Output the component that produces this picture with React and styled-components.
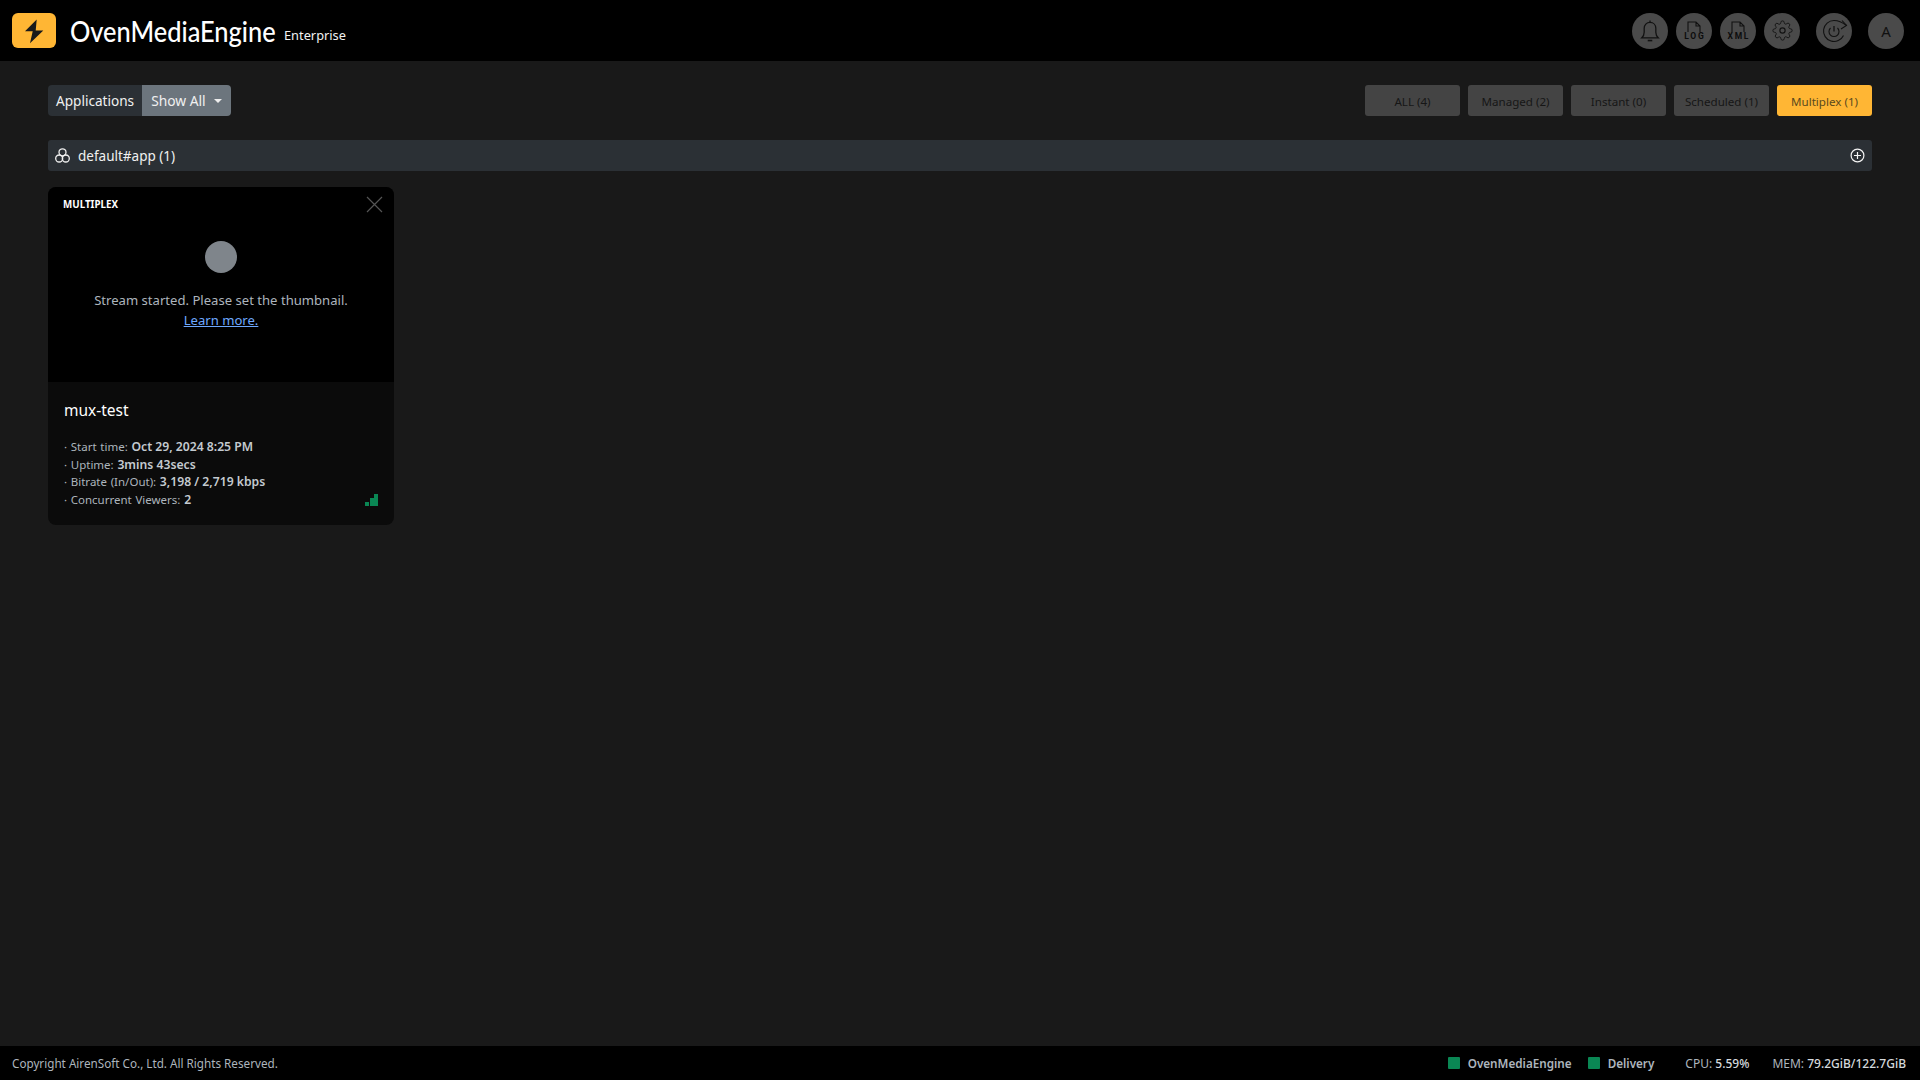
import React from 'react'
import styled, { createGlobalStyle } from 'styled-components'

const filters = [
  { label: 'ALL (4)' },
  { label: 'Managed (2)' },
  { label: 'Instant (0)' },
  { label: 'Scheduled (1)' },
  { label: 'Multiplex (1)', active: true },
]

function Bolt() {
  return (
    <svg width="22" height="26" viewBox="0 0 22 26">
      <path d="M13.700 1.500 2 13.200h7.700L7 25.200l13.300-12.700h-7.600z" fill="#1a1a1a" />
    </svg>
  )
}

function BellIcon() {
  return (
    <svg width="20" height="24" viewBox="0 0 22 26" fill="none" stroke="#111" strokeWidth="1.400">
      <path d="M2 20.500h18c-1.800-1.600-2.600-3-2.600-6V10c0-3.600-2.600-6.400-6.400-6.400S4.600 6.400 4.600 10v4.500c0 3-.8 4.400-2.600 6z" />
      <path d="M11 1.500v2" />
      <path d="M8.500 23.500h5" strokeWidth="1.800" />
    </svg>
  )
}

function FileIcon({ label }) {
  return (
    <FileWrap>
      <svg width="16" height="11" viewBox="0 0 16 11" fill="none" stroke="#111" strokeWidth="1.100">
        <path d="M2 11V1h8l4 4v6M10 1v4h4" />
      </svg>
      <FileLabel>{label}</FileLabel>
    </FileWrap>
  )
}

function GearIcon() {
  return (
    <svg width="21" height="21" viewBox="0 0 24 24" fill="none" stroke="#111" strokeWidth="1">
      <path d="M19.400 15a1.650 1.650 0 0 0 .33 1.820l.06.06a2 2 0 1 1-2.830 2.830l-.06-.06a1.650 1.650 0 0 0-2.820 1.170V21a2 2 0 1 1-4 0v-.09A1.650 1.650 0 0 0 7.260 19.740l-.06.06a2 2 0 1 1-2.830-2.830l.06-.06a1.650 1.650 0 0 0-1.170-2.820H3a2 2 0 1 1 0-4h.09A1.650 1.650 0 0 0 4.260 7.260l-.06-.06a2 2 0 1 1 2.830-2.830l.06.06a1.650 1.650 0 0 0 1.820.33H9a1.650 1.650 0 0 0 1-1.510V3a2 2 0 1 1 4 0v.09a1.650 1.650 0 0 0 2.820 1.170l.06-.06a2 2 0 1 1 2.830 2.830l-.06.06a1.650 1.650 0 0 0-.33 1.820V9a1.650 1.650 0 0 0 1.510 1H21a2 2 0 1 1 0 4h-.09a1.650 1.650 0 0 0-1.510 1z" />
      <circle cx="12" cy="12" r="3" strokeWidth="1.300" />
    </svg>
  )
}

function RestartIcon() {
  return (
    <svg width="30" height="28" viewBox="0 0 30 28" fill="none" stroke="#111" strokeWidth="1.100">
      <path d="M24.500 18.500A10.500 10.500 0 1 1 15 3.500c4 0 8 1.500 12.500 5" />
      <path d="M23 3.500l4.500 5-5.500 3.500" />
      <path d="M11.500 11a5 5 0 1 0 7 0" />
      <path d="M15 9v5.500" strokeWidth="1.300" />
    </svg>
  )
}

function ClusterIcon() {
  return (
    <svg width="15" height="15" viewBox="0 0 15 15" fill="none" stroke="#f0f0f0" strokeWidth="1.300">
      <circle cx="7.500" cy="4.300" r="3.500" />
      <circle cx="4.200" cy="10.500" r="3.500" />
      <circle cx="10.800" cy="10.500" r="3.500" />
    </svg>
  )
}

function PlusCircle() {
  return (
    <svg width="15" height="15" viewBox="0 0 15 15" fill="none" stroke="#f4f4f4">
      <circle cx="7.500" cy="7.500" r="6.400" strokeWidth="1.200" />
      <path d="M7.500 4v7M4 7.500h7" strokeWidth="1.200" />
    </svg>
  )
}

function CloseIcon() {
  return (
    <svg width="17" height="17" viewBox="0 0 17 17" stroke="#555" strokeWidth="1.200">
      <path d="M1 1l15 15M16 1 1 16" />
    </svg>
  )
}

function SignalIcon() {
  return (
    <SignalBars>
      <Bar $h={4} />
      <Bar $h={8} />
      <Bar $h={12} />
    </SignalBars>
  )
}

export default function App() {
  return (
    <Page>
      <GlobalStyle />
      <Header>
        <Brand>
          <LogoBox>
            <Bolt />
          </LogoBox>
          <LogoText>OvenMediaEngine</LogoText>
          <Edition>Enterprise</Edition>
        </Brand>
        <HeaderActions>
          <RoundButton><BellIcon /></RoundButton>
          <RoundButton><FileIcon label="LOG" /></RoundButton>
          <RoundButton><FileIcon label="XML" /></RoundButton>
          <RoundButton><GearIcon /></RoundButton>
          <RoundButton $gap={16}><RestartIcon /></RoundButton>
          <RoundButton $gap={16}><Avatar>A</Avatar></RoundButton>
        </HeaderActions>
      </Header>

      <Main>
        <Toolbar>
          <SelectGroup>
            <SelectLabel>Applications</SelectLabel>
            <SelectButton>Show All<Caret /></SelectButton>
          </SelectGroup>
          <Filters>
            {filters.map(f => (
              <FilterButton key={f.label} $active={f.active}>{f.label}</FilterButton>
            ))}
          </Filters>
        </Toolbar>

        <GroupBar>
          <GroupTitle>
            <ClusterIcon />
            default#app (1)
          </GroupTitle>
          <PlusCircle />
        </GroupBar>

        <Card>
          <Thumb>
            <TypeTag>MULTIPLEX</TypeTag>
            <CloseSlot><CloseIcon /></CloseSlot>
            <Dot />
            <ThumbText>Stream started. Please set the thumbnail.</ThumbText>
            <LearnMore href="#">Learn more.</LearnMore>
          </Thumb>
          <CardBody>
            <StreamName>mux-test</StreamName>
            <Stat>· Start time: <b>Oct 29, 2024 8:25 PM</b></Stat>
            <Stat>· Uptime: <b>3mins 43secs</b></Stat>
            <Stat>· Bitrate (In/Out): <b>3,198 / 2,719 kbps</b></Stat>
            <Stat>· Concurrent Viewers: <b>2</b></Stat>
            <SignalSlot><SignalIcon /></SignalSlot>
          </CardBody>
        </Card>
      </Main>

      <Footer>
        <Copyright>Copyright AirenSoft Co., Ltd. All Rights Reserved.</Copyright>
        <Status>
          <StatusItem><Square />OvenMediaEngine</StatusItem>
          <StatusItem><Square />Delivery</StatusItem>
          <Metric $gap={15}>CPU: <b>5.59%</b></Metric>
          <Metric $gap={23}>MEM: <b>79.2GiB/122.7GiB</b></Metric>
        </Status>
      </Footer>
    </Page>
  )
}

const GlobalStyle = createGlobalStyle`
  html, body {
    margin: 0;
    padding: 0;
    background: #191919;
  }
  * {
    box-sizing: border-box;
  }
`

const Page = styled.div`
  width: 1920px;
  height: 1080px;
  display: flex;
  flex-direction: column;
  background: #191919;
  color: #dee2e6;
  font-family: 'Noto Sans', 'Open Sans', sans-serif;
  overflow: hidden;
`

const Header = styled.header`
  height: 61px;
  background: #000;
  display: flex;
  align-items: center;
  justify-content: space-between;
  padding: 0 16px 0 12px;
`

const Brand = styled.div`
  display: flex;
  align-items: center;
`

const LogoBox = styled.div`
  width: 44px;
  height: 35px;
  background: #ffb634;
  border-radius: 6px;
  display: flex;
  align-items: center;
  justify-content: center;
`

const LogoText = styled.span`
  display: inline-block;
  margin: 0 -29px 0 14px;
  font-family: Lato, 'Noto Sans', sans-serif;
  font-size: 29px;
  font-weight: 500;
  line-height: 1;
  color: #fff;
  transform: scaleX(0.875);
  transform-origin: left center;
`

const Edition = styled.span`
  margin: 9px 0 0 8px;
  font-size: 12.800px;
  color: #f2f2f2;
`

const HeaderActions = styled.div`
  display: flex;
  align-items: center;
`

const RoundButton = styled.div`
  width: 36px;
  height: 36px;
  margin-left: ${p => p.$gap || 8}px;
  border-radius: 50%;
  background: #4a4a4a;
  display: flex;
  align-items: center;
  justify-content: center;
`

const FileWrap = styled.div`
  display: flex;
  flex-direction: column;
  align-items: center;
`

const FileLabel = styled.span`
  font-family: Roboto, sans-serif;
  font-size: 8.500px;
  line-height: 9px;
  font-weight: 700;
  letter-spacing: 1.700px;
  margin-right: -1.700px;
  color: #0c0c0c;
`

const Avatar = styled.span`
  font-size: 15px;
  color: #111;
`

const Main = styled.main`
  flex: 1;
  padding: 24px 48px 0;
`

const Toolbar = styled.div`
  display: flex;
  justify-content: space-between;
  align-items: center;
`

const SelectGroup = styled.div`
  display: flex;
  height: 31px;
  font-size: 13.600px;
`

const SelectLabel = styled.div`
  padding: 0 8px;
  display: flex;
  align-items: center;
  background: #2b3035;
  color: #f0f0f0;
  border-radius: 4px 0 0 4px;
`

const SelectButton = styled.div`
  padding: 0 9px;
  display: flex;
  align-items: center;
  background: #6c757d;
  color: #f0f0f0;
  font-size: 13.800px;
  border-radius: 0 4px 4px 0;
`

const Caret = styled.span`
  margin-left: 8px;
  border-top: 4px solid #eee;
  border-left: 4px solid transparent;
  border-right: 4px solid transparent;
`

const Filters = styled.div`
  display: flex;
  gap: 8px;
`

const FilterButton = styled.div`
  width: 95px;
  height: 31px;
  padding-top: 1px;
  display: flex;
  align-items: center;
  justify-content: center;
  font-size: 11.600px;
  white-space: nowrap;
  border-radius: 3px;
  background: ${p => (p.$active ? '#ffb634' : '#444')};
  color: ${p => (p.$active ? '#5a4a1e' : '#161616')};
`

const GroupBar = styled.div`
  height: 31px;
  margin-top: 24px;
  padding: 0 7px;
  display: flex;
  align-items: center;
  justify-content: space-between;
  background: #2b3035;
  border-radius: 3px;
`

const GroupTitle = styled.div`
  display: flex;
  align-items: center;
  gap: 8px;
  font-size: 13.500px;
  color: #f0f0f0;
`

const Card = styled.article`
  width: 346px;
  margin-top: 16px;
  border-radius: 8px;
  overflow: hidden;
  background: #0b0b0b;
`

const Thumb = styled.div`
  position: relative;
  height: 195px;
  background: #000;
  display: flex;
  flex-direction: column;
  align-items: center;
  padding-top: 54px;
`

const TypeTag = styled.span`
  position: absolute;
  top: 11px;
  left: 15px;
  font-size: 9.800px;
  font-weight: 700;
  color: #fff;
`

const CloseSlot = styled.span`
  position: absolute;
  top: 9px;
  right: 11px;
  line-height: 0;
`

const Dot = styled.div`
  width: 32px;
  height: 32px;
  border-radius: 50%;
  background: #7f858b;
`

const ThumbText = styled.div`
  margin-top: 17px;
  font-size: 13.100px;
  line-height: 20px;
  color: #adb5bd;
`

const LearnMore = styled.a`
  font-size: 13.100px;
  line-height: 20px;
  color: #6ea8fe;
  text-decoration: underline;
`

const CardBody = styled.div`
  position: relative;
  height: 143px;
  padding: 17px 16px 0;
`

const StreamName = styled.div`
  font-size: 15.500px;
  line-height: 22px;
  color: #fff;
  margin-bottom: 17px;
`

const Stat = styled.div`
  font-size: 11.500px;
  line-height: 17.700px;
  word-spacing: 0.700px;
  color: #adb5bd;

  b {
    font-size: 12.200px;
    font-weight: 600;
    word-spacing: 0;
    color: #c4cad0;
  }
`

const SignalSlot = styled.div`
  position: absolute;
  right: 16px;
  bottom: 19px;
`

const SignalBars = styled.div`
  display: flex;
  align-items: flex-end;
  gap: 0.500px;
`

const Bar = styled.span`
  width: 4px;
  height: ${p => p.$h}px;
  background: #0a8754;
`

const Footer = styled.footer`
  height: 34px;
  background: #000;
  display: flex;
  align-items: center;
  justify-content: space-between;
  padding: 0 14px 0 12px;
  font-size: 11.700px;
  color: #adb5bd;
`

const Copyright = styled.span``

const Status = styled.div`
  display: flex;
  align-items: center;
`

const StatusItem = styled.span`
  display: flex;
  align-items: center;
  gap: 8px;
  margin-right: 16px;
  font-weight: 600;
`

const Square = styled.i`
  width: 12px;
  height: 12px;
  background: #0a8754;
  border-radius: 1px;
`

const Metric = styled.span`
  margin-left: ${p => p.$gap}px;
  font-size: 12px;

  b {
    font-weight: 500;
    color: #d5d9dd;
  }
`
